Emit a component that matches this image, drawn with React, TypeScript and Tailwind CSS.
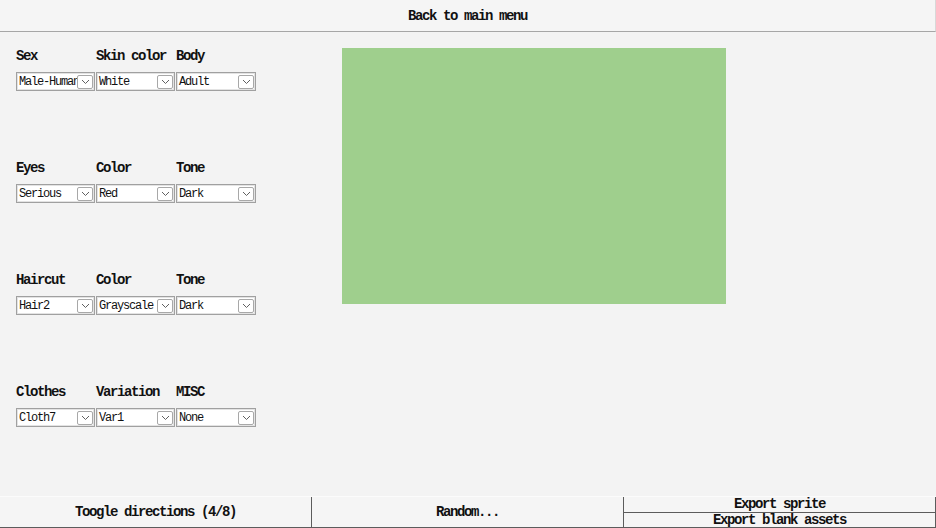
import React from "react";

const groups = [
  [
    { label: "Sex", value: "Male-Human" },
    { label: "Skin color", value: "White" },
    { label: "Body", value: "Adult" },
  ],
  [
    { label: "Eyes", value: "Serious" },
    { label: "Color", value: "Red" },
    { label: "Tone", value: "Dark" },
  ],
  [
    { label: "Haircut", value: "Hair2" },
    { label: "Color", value: "Grayscale" },
    { label: "Tone", value: "Dark" },
  ],
  [
    { label: "Clothes", value: "Cloth7" },
    { label: "Variation", value: "Var1" },
    { label: "MISC", value: "None" },
  ],
];

function Combo({ value, last }: { value: string; last?: boolean }) {
  return (
    <div
      className={`${last ? "w-[80px]" : "w-[79px]"} h-[19px] border border-[#a0a0a0] bg-white flex items-center shadow-[inset_0_0_0_1px_#e3e3e3] overflow-hidden`}
    >
      <span className="flex-1 pl-[2px] text-[12px] tracking-[-1.2px] text-[#111] whitespace-nowrap overflow-hidden leading-none">
        {value}
      </span>
      <div className="w-[16px] h-[14px] mr-[1px] shrink-0 border border-[#a8a8a8] rounded-[2px] bg-white flex items-center justify-center">
        <svg width="9" height="6" viewBox="0 0 9 6">
          <path d="M1 1 L4.5 4.5 L8 1" fill="none" stroke="#606060" strokeWidth="1" />
        </svg>
      </div>
    </div>
  );
}

export default function App() {
  return (
    <div className="w-[936px] h-[528px] bg-[#f3f3f3] flex flex-col font-['Liberation_Mono',monospace] text-[#111] overflow-hidden">
      {/* top bar */}
      <button className="h-[32px] shrink-0 w-full bg-[#f5f5f5] border-b border-r border-[#a6a6a6] border-r-[#d8d8d8] text-[14px] font-bold tracking-[-1.4px] pt-[1px] flex items-center justify-center">
        Back to main menu
      </button>

      {/* main */}
      <div className="flex-1 flex">
        <div className="w-[342px] shrink-0 pl-[16px] pt-[16px] flex flex-col gap-[69px]">
          {groups.map((row, i) => (
            <div key={i} className="grid grid-cols-[80px_80px_80px]">
              {row.map((c, j) => (
                <div key={j} className="flex flex-col">
                  <div className="h-[16px] leading-[16px] text-[14px] font-bold tracking-[-1.4px] whitespace-nowrap">
                    {c.label}
                  </div>
                  <div className="mt-[8px]">
                    <Combo value={c.value} last={j === 2} />
                  </div>
                </div>
              ))}
            </div>
          ))}
        </div>
        <div className="pt-[16px]">
          <div className="w-[384px] h-[256px] bg-[#9fcf8d]" />
        </div>
      </div>

      {/* bottom bar */}
      <div className="h-[32px] shrink-0 flex border-t border-[#fbfbfb]">
        <button className="w-[312px] h-full bg-[#f5f5f5] border-r border-b border-[#5c5c5c] text-[14px] font-bold tracking-[-1.4px] flex items-center justify-center">
          Toogle directions (4/8)
        </button>
        <button className="w-[312px] h-full bg-[#f5f5f5] border-r border-b border-[#5c5c5c] text-[14px] font-bold tracking-[-1.4px] flex items-center justify-center">
          Random...
        </button>
        <div className="w-[312px] h-full flex flex-col">
          <button className="h-[16px] bg-[#f5f5f5] border-r border-b border-[#5c5c5c] text-[14px] font-bold tracking-[-1.4px] leading-none flex items-center justify-center">
            Export sprite
          </button>
          <button className="h-[16px] bg-[#f5f5f5] border-r border-b border-[#5c5c5c] text-[14px] font-bold tracking-[-1.4px] leading-none flex items-center justify-center">
            Export blank assets
          </button>
        </div>
      </div>
    </div>
  );
}
